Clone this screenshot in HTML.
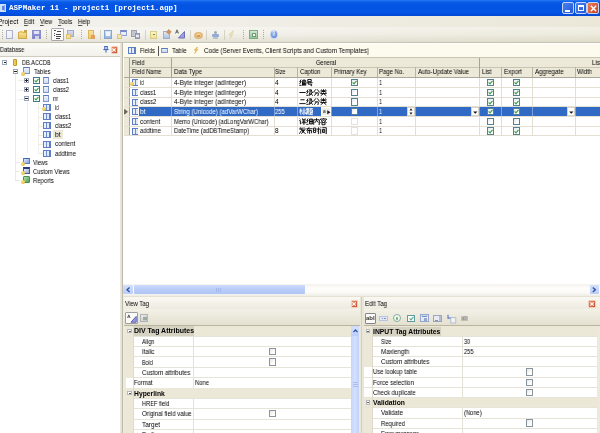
<!DOCTYPE html>
<html><head><meta charset="utf-8"><title>ASPMaker</title>
<style>
html,body{margin:0;padding:0;}
body{width:600px;height:433px;overflow:hidden;position:relative;background:#ece9d8;font-family:"Liberation Sans",sans-serif;font-size:6.5px;color:#000;}
div{position:absolute;box-sizing:border-box;}
u{text-decoration-color:#555;text-decoration-thickness:0.6px;text-underline-offset:0.6px;}
svg{position:absolute;overflow:visible;}
.t{white-space:nowrap;line-height:8px;height:8px;will-change:transform;}
.b{font-weight:bold;}
.cb{width:7px;height:7px;background:#fff;border:1px solid #5a7a9c;}
</style></head><body>
<div id="w" style="left:0;top:0;width:600px;height:433px;filter:blur(0.35px);">

<div style="left:0px;top:0px;width:600px;height:16px;background:linear-gradient(#2a7af5 0%,#0a5ce8 12%,#0453e2 35%,#0456e8 75%,#0349d4 100%);"></div>
<div style="left:0px;top:4px;width:6px;height:7.5px;background:#cfe0fa;"></div>
<div style="left:1.5px;top:5.5px;width:2px;height:4.5px;background:#5a86dc;"></div>
<div style="left:4px;top:4.5px;width:1.2px;height:6px;background:#7fa4e8;"></div>
<div class="t" style="left:9.1px;top:3px;font-family:'Liberation Mono',monospace;font-weight:bold;font-size:7.6px;color:#fff;line-height:10px;height:10px;">ASPMaker 11 - project1 [project1.agp]</div>
<div style="left:561.5px;top:2px;width:12px;height:12px;background:linear-gradient(135deg,#4a82ee,#2456d8);border:1px solid #c3d4f8;border-radius:2px;"></div>
<div style="left:574.5px;top:2px;width:12px;height:12px;background:linear-gradient(135deg,#4a82ee,#2456d8);border:1px solid #c3d4f8;border-radius:2px;"></div>
<div style="left:587.2px;top:2px;width:12px;height:12px;background:linear-gradient(135deg,#e8805a,#c8401c);border:1px solid #c3d4f8;border-radius:2px;"></div>
<div style="left:565px;top:10px;width:5px;height:2px;background:#fff;"></div>
<div style="left:578px;top:5px;width:6px;height:6px;border:1px solid #fff;border-top:2px solid #fff;"></div>
<svg style="left:590px;top:4.5px" width="7" height="7" viewBox="0 0 7 7"><path d="M0.8 0.8L6.2 6.2M6.2 0.8L0.8 6.2" stroke="#fff" stroke-width="1.4" fill="none"/></svg>
<div style="left:0px;top:16px;width:600px;height:11px;background:linear-gradient(90deg,#f3f2ed 0%,#efede4 50%,#ebe8d9 100%);"></div>
<div class="t" style="left:-1.6px;top:17.5px;transform:scaleX(0.984);transform-origin:0 0;"><u>P</u>roject</div>
<div class="t" style="left:23.5px;top:17.5px;transform:scaleX(0.911);transform-origin:0 0;"><u>E</u>dit</div>
<div class="t" style="left:40px;top:17.5px;transform:scaleX(0.873);transform-origin:0 0;"><u>V</u>iew</div>
<div class="t" style="left:58px;top:17.5px;transform:scaleX(0.936);transform-origin:0 0;"><u>T</u>ools</div>
<div class="t" style="left:78px;top:17.5px;transform:scaleX(0.898);transform-origin:0 0;"><u>H</u>elp</div>
<div style="left:0px;top:27px;width:600px;height:16px;background:linear-gradient(rgba(255,255,255,.35) 0%,rgba(255,255,255,.15) 45%,rgba(120,110,60,.10) 100%),linear-gradient(90deg,#f3f2ed 0%,#efede4 50%,#ebe8d9 100%);border-bottom:1px solid #c6c3b2;"></div>
<div style="left:0px;top:43px;width:120px;height:13px;background:linear-gradient(#fbfbf8,#f2f1ea);"></div>
<div class="t" style="left:0px;top:46px;transform:scaleX(0.870);transform-origin:0 0;">Database</div>
<div style="left:0px;top:55.6px;width:120px;height:377.4px;background:#fff;border-top:1px solid #cfccbe;"></div>
<div style="left:119.6px;top:43px;width:4.4px;height:390px;background:linear-gradient(90deg,#eceae2 0%,#e4e1d4 40%,#bdb9a8 62%,#e8e5da 80%,#f6f5f0 100%);"></div>
<div style="left:123px;top:43px;width:477px;height:14.5px;background:#fdfbee;border-top:0.6px solid #fff;"></div>
<div style="left:123px;top:57.5px;width:477px;height:226.5px;background:#fff;"></div>
<div style="left:0;top:0;width:600px;height:43px;opacity:.8">
<div style="left:1.5px;top:30px;width:1px;height:1px;background:#9c9a8c;"></div>
<div style="left:1.5px;top:32px;width:1px;height:1px;background:#9c9a8c;"></div>
<div style="left:1.5px;top:34px;width:1px;height:1px;background:#9c9a8c;"></div>
<div style="left:1.5px;top:36px;width:1px;height:1px;background:#9c9a8c;"></div>
<div style="left:1.5px;top:38px;width:1px;height:1px;background:#9c9a8c;"></div>
<div style="left:5.5px;top:29.5px;width:7.5px;height:9.5px;background:linear-gradient(135deg,#fff,#e4e6f4);border:1px solid #9aa0c4;"></div>
<div style="left:18px;top:32px;width:9px;height:6.5px;background:linear-gradient(#f6dc78,#e6b93c);border:1px solid #c49a2e;"></div>
<div style="left:18.5px;top:30.5px;width:4px;height:2px;background:#e9c04c;"></div>
<div style="left:23.5px;top:29.5px;width:3px;height:2px;background:#c08a30;"></div>
<div style="left:32px;top:30px;width:9px;height:9px;background:linear-gradient(#8a8ed8,#5a62c0);border:1px solid #6e74c4;"></div>
<div style="left:34px;top:30.5px;width:5px;height:3.5px;background:#dfe2f6;"></div>
<div style="left:34.5px;top:36px;width:4px;height:3px;background:#c8ccee;"></div>
<div style="left:46px;top:30px;width:1px;height:1px;background:#9c9a8c;"></div>
<div style="left:46px;top:32px;width:1px;height:1px;background:#9c9a8c;"></div>
<div style="left:46px;top:34px;width:1px;height:1px;background:#9c9a8c;"></div>
<div style="left:46px;top:36px;width:1px;height:1px;background:#9c9a8c;"></div>
<div style="left:46px;top:38px;width:1px;height:1px;background:#9c9a8c;"></div>
<div style="left:50.5px;top:27.5px;width:13.5px;height:13.5px;background:#fff;border:1px solid #9a98a0;border-radius:1px;"></div>
<div style="left:53.5px;top:30px;width:2px;height:1.2px;background:#222;"></div>
<div style="left:56.5px;top:30.5px;width:4px;height:1.2px;background:#222;"></div>
<div style="left:54px;top:32.5px;width:1px;height:1.2px;background:#222;"></div>
<div style="left:55.5px;top:33.5px;width:2px;height:1.2px;background:#222;"></div>
<div style="left:58px;top:33.5px;width:3px;height:1.2px;background:#222;"></div>
<div style="left:55.5px;top:36px;width:2px;height:1.2px;background:#222;"></div>
<div style="left:58px;top:36px;width:3px;height:1.2px;background:#222;"></div>
<div style="left:54px;top:34.5px;width:1px;height:1.2px;background:#222;"></div>
<div style="left:56px;top:38px;width:4px;height:1.2px;background:#222;"></div>
<div style="left:67px;top:30px;width:7px;height:6.5px;background:linear-gradient(#cfd6f0,#aab4e0);border:1px solid #8e98cc;"></div>
<div style="left:65.5px;top:33.5px;width:5px;height:5px;background:#f2dc8a;border:1px solid #d6b850;"></div>
<div style="left:80.5px;top:30px;width:1px;height:1px;background:#9c9a8c;"></div>
<div style="left:80.5px;top:32px;width:1px;height:1px;background:#9c9a8c;"></div>
<div style="left:80.5px;top:34px;width:1px;height:1px;background:#9c9a8c;"></div>
<div style="left:80.5px;top:36px;width:1px;height:1px;background:#9c9a8c;"></div>
<div style="left:80.5px;top:38px;width:1px;height:1px;background:#9c9a8c;"></div>
<div style="left:87.5px;top:30px;width:6px;height:8.5px;background:linear-gradient(#f8e08a,#efc04a);border:1px solid #d8a83a;"></div>
<div style="left:91px;top:35px;width:4px;height:3.5px;background:#e08a3a;"></div>
<div style="left:99.5px;top:29.5px;width:1px;height:10.5px;background:#cfcbbb;"></div>
<div style="left:104px;top:30px;width:8px;height:8.5px;background:linear-gradient(#d6e6f8,#7aa6dc);border:1px solid #6a94cc;"></div>
<div style="left:106px;top:32px;width:4px;height:4px;background:#f0f6fc;"></div>
<div style="left:119.5px;top:29.5px;width:7px;height:6.5px;background:#e6ebf8;border:1px solid #7a8ccc;border-top:2px solid #5a70c0;"></div>
<div style="left:116.5px;top:33.5px;width:5px;height:5px;background:#f4e4a0;border:1px solid #d8bc5c;"></div>
<div style="left:131px;top:29.5px;width:6px;height:7.5px;background:#b8bcc8;border:1px solid #8a8e9c;"></div>
<div style="left:134.5px;top:33px;width:5.5px;height:5.5px;background:#9aa4c0;border:1px solid #7480a4;"></div>
<div style="left:136px;top:35px;width:2.5px;height:2px;background:#e8ecf4;"></div>
<div style="left:145px;top:29.5px;width:1px;height:10.5px;background:#cfcbbb;"></div>
<div style="left:150px;top:31px;width:7px;height:7.5px;background:linear-gradient(#fbf4b8,#efe088);border:1px solid #d4c66c;"></div>
<div style="left:153px;top:33.5px;width:1.5px;height:1.5px;background:#6a6a4a;"></div>
<div style="left:162.5px;top:31px;width:7px;height:7.5px;background:linear-gradient(#dfe8f6,#9cb8e0);border:1px solid #88a0cc;"></div>
<div style="left:167px;top:29.5px;width:4px;height:3.5px;background:#c8783a;transform:rotate(40deg);"></div>
<svg style="left:175px;top:29px" width="10" height="10" viewBox="0 0 10 10"><path d="M3.5 9L9.5 2.5V9Z" fill="#8a8ee0" stroke="#4a4eb0" stroke-width="1"/><path d="M0.5 4.5L2 0.8L3.5 4.5M1 3.2H3" stroke="#333" stroke-width="0.9" fill="none"/></svg>
<div style="left:190px;top:29.5px;width:1px;height:10.5px;background:#cfcbbb;"></div>
<div style="left:194px;top:31.5px;width:8.5px;height:7.5px;background:radial-gradient(circle at 50% 45%,#fbe2b6 0,#f0b866 45%,#dd9a3e 100%);border-radius:4px;border:1px solid #d8a050;"></div>
<div style="left:196.8px;top:34.5px;width:3px;height:2.5px;background:#fff4dc;border:1px solid #c8893a;"></div>
<div style="left:206px;top:29.5px;width:1px;height:10.5px;background:#cfcbbb;"></div>
<div style="left:213.5px;top:30.5px;width:3.5px;height:3.5px;background:#8a94b4;border-radius:2px;"></div>
<div style="left:211.5px;top:34px;width:7.5px;height:3px;background:#7f9ad0;border-radius:1px;"></div>
<div style="left:212.5px;top:37px;width:5.5px;height:1.5px;background:#b0b8cc;"></div>
<div style="left:223.5px;top:29.5px;width:1px;height:10.5px;background:#cfcbbb;"></div>
<svg style="left:228px;top:30px" width="8" height="9" viewBox="0 0 8 9"><path d="M5 0.5L2.5 4H5L2 8.5L3 5H1L3 2.5H5.5Z" fill="#e8dca4" stroke="#d8cc94" stroke-width="0.6"/></svg>
<div style="left:243px;top:30px;width:1px;height:1px;background:#9c9a8c;"></div>
<div style="left:243px;top:32px;width:1px;height:1px;background:#9c9a8c;"></div>
<div style="left:243px;top:34px;width:1px;height:1px;background:#9c9a8c;"></div>
<div style="left:243px;top:36px;width:1px;height:1px;background:#9c9a8c;"></div>
<div style="left:243px;top:38px;width:1px;height:1px;background:#9c9a8c;"></div>
<div style="left:249px;top:30px;width:8.5px;height:9px;background:linear-gradient(#cfe6cc,#7db987);border:1px solid #5f9a6c;"></div>
<div style="left:251.5px;top:32.5px;width:4px;height:4px;background:#f4faf2;border:1px solid #4c8a5c;"></div>
<div style="left:263px;top:30px;width:1px;height:1px;background:#9c9a8c;"></div>
<div style="left:263px;top:32px;width:1px;height:1px;background:#9c9a8c;"></div>
<div style="left:263px;top:34px;width:1px;height:1px;background:#9c9a8c;"></div>
<div style="left:263px;top:36px;width:1px;height:1px;background:#9c9a8c;"></div>
<div style="left:263px;top:38px;width:1px;height:1px;background:#9c9a8c;"></div>
<div style="left:269.5px;top:30px;width:8.5px;height:8.5px;background:radial-gradient(circle at 45% 40%,#9cbcf4 0,#4f7fdc 55%,#2f5cc0 100%);border-radius:5px;border:1px solid #b8cdf4;"></div>
<div class="t" style="left:271.9px;top:30.3px;color:#fff;font-weight:bold;font-size:6.5px;transform:scaleX(0.870);transform-origin:0 0;">?</div>
</div>
<div style="left:15.4px;top:74.37px;width:0.6px;height:105.83999999999997px;background:#ebebe5;"></div>
<div style="left:27px;top:101.58px;width:0.6px;height:51.42px;background:#eeeee8;"></div>
<div style="left:38px;top:102.58px;width:0.6px;height:50.42px;background:#f0f0ea;"></div>
<div style="left:38px;top:107.65px;width:5px;height:0.6px;background:#eeeee8;"></div>
<div style="left:38px;top:116.72px;width:5px;height:0.6px;background:#eeeee8;"></div>
<div style="left:38px;top:125.78999999999999px;width:5px;height:0.6px;background:#eeeee8;"></div>
<div style="left:38px;top:134.86px;width:5px;height:0.6px;background:#eeeee8;"></div>
<div style="left:38px;top:143.93px;width:5px;height:0.6px;background:#eeeee8;"></div>
<div style="left:38px;top:153.0px;width:5px;height:0.6px;background:#eeeee8;"></div>
<div style="left:15.4px;top:162.07px;width:5px;height:0.6px;background:#ebebe5;"></div>
<div style="left:15.4px;top:171.14px;width:5px;height:0.6px;background:#ebebe5;"></div>
<div style="left:15.4px;top:180.20999999999998px;width:5px;height:0.6px;background:#ebebe5;"></div>
<div style="left:18px;top:80.44px;width:6px;height:0.6px;background:#eeeee8;"></div>
<div style="left:18px;top:89.50999999999999px;width:6px;height:0.6px;background:#eeeee8;"></div>
<div style="left:18px;top:98.58px;width:6px;height:0.6px;background:#eeeee8;"></div>
<div style="left:2.4px;top:60.099999999999994px;width:4.6px;height:4.6px;background:#fff;border:1px solid #9aa6b8;"></div>
<div style="left:3.5px;top:62.099999999999994px;width:2.4px;height:0.8px;background:#222;"></div>
<div style="left:13px;top:59.099999999999994px;width:4.4px;height:6.8px;background:linear-gradient(90deg,#e8b838,#fae68c 50%,#d8a028);border-radius:1.5px/1px;border:0.5px solid #c89820;"></div>
<div class="t" style="left:22.2px;top:58.8px;transform:scaleX(0.851);transform-origin:0 0;">DB.ACCDB</div>
<div style="left:13.3px;top:69.17px;width:4.6px;height:4.6px;background:#fff;border:1px solid #9aa6b8;"></div>
<div style="left:14.4px;top:71.17px;width:2.4px;height:0.8px;background:#222;"></div>
<div style="left:23px;top:67.17px;width:7px;height:6.4px;background:linear-gradient(#eef3fb,#cfdcf2);border:1px solid #7f95c8;border-top:1.6px solid #5c78c0;"></div>
<div style="left:21px;top:71.57000000000001px;width:4.2px;height:4.2px;background:radial-gradient(circle at 40% 35%,#f8e47a,#d8b030);border-radius:2.2px;"></div>
<div class="t" style="left:33.5px;top:67.87px;transform:scaleX(0.878);transform-origin:0 0;">Tables</div>
<div style="left:24.3px;top:78.24px;width:4.6px;height:4.6px;background:#fff;border:1px solid #9aa6b8;"></div>
<div style="left:25.400000000000002px;top:80.24px;width:2.4px;height:0.8px;background:#222;"></div>
<div style="left:26.2px;top:79.34px;width:0.8px;height:2.6px;background:#222;"></div>
<div style="left:32.7px;top:76.84px;width:7.2px;height:7.2px;background:#fff;border:1px solid #3d7a8c;"></div>
<svg style="left:33.900000000000006px;top:78.03999999999999px" width="5" height="5" viewBox="0 0 5 5"><path d="M0.6 2.4L2 3.9L4.5 0.8" stroke="#3aa24a" stroke-width="1.2" fill="none"/></svg>
<div style="left:42.6px;top:77.14px;width:6.8px;height:6.6px;background:linear-gradient(#eef3fb,#cfdcf2);border:1px solid #7f95c8;border-top:1.6px solid #5c78c0;"></div>
<div class="t" style="left:53.3px;top:76.94px;transform:scaleX(0.870);transform-origin:0 0;">class1</div>
<div style="left:24.3px;top:87.30999999999999px;width:4.6px;height:4.6px;background:#fff;border:1px solid #9aa6b8;"></div>
<div style="left:25.400000000000002px;top:89.30999999999999px;width:2.4px;height:0.8px;background:#222;"></div>
<div style="left:26.2px;top:88.41px;width:0.8px;height:2.6px;background:#222;"></div>
<div style="left:32.7px;top:85.91px;width:7.2px;height:7.2px;background:#fff;border:1px solid #3d7a8c;"></div>
<svg style="left:33.900000000000006px;top:87.10999999999999px" width="5" height="5" viewBox="0 0 5 5"><path d="M0.6 2.4L2 3.9L4.5 0.8" stroke="#3aa24a" stroke-width="1.2" fill="none"/></svg>
<div style="left:42.6px;top:86.21px;width:6.8px;height:6.6px;background:linear-gradient(#eef3fb,#cfdcf2);border:1px solid #7f95c8;border-top:1.6px solid #5c78c0;"></div>
<div class="t" style="left:53.3px;top:86.00999999999999px;transform:scaleX(0.870);transform-origin:0 0;">class2</div>
<div style="left:24.3px;top:96.38px;width:4.6px;height:4.6px;background:#fff;border:1px solid #9aa6b8;"></div>
<div style="left:25.400000000000002px;top:98.38px;width:2.4px;height:0.8px;background:#222;"></div>
<div style="left:32.7px;top:94.98px;width:7.2px;height:7.2px;background:#fff;border:1px solid #3d7a8c;"></div>
<svg style="left:33.900000000000006px;top:96.17999999999999px" width="5" height="5" viewBox="0 0 5 5"><path d="M0.6 2.4L2 3.9L4.5 0.8" stroke="#3aa24a" stroke-width="1.2" fill="none"/></svg>
<div style="left:42.6px;top:95.28px;width:6.8px;height:6.6px;background:linear-gradient(#eef3fb,#cfdcf2);border:1px solid #7f95c8;border-top:1.6px solid #5c78c0;"></div>
<div class="t" style="left:53.3px;top:95.08px;transform:scaleX(0.870);transform-origin:0 0;">nr</div>
<div style="left:43.3px;top:104.25px;width:7.4px;height:7px;background:linear-gradient(90deg,#5f7dc6 0 1.2px,#eaf0fb 1.2px 3.2px,#6f8bd0 3.2px 4.2px,#e2eafa 4.2px 6.2px,#5f7dc6 6.2px);border-top:1.4px solid #5f7dc6;border-bottom:1.2px solid #5f7dc6;"></div>
<div style="left:41.8px;top:107.15px;width:4.2px;height:4.2px;background:radial-gradient(circle at 40% 35%,#f8e47a,#d8b030);border-radius:2.2px;"></div>
<div class="t" style="left:55.4px;top:104.15px;transform:scaleX(0.712);transform-origin:0 0;">id</div>
<div style="left:43.3px;top:113.32px;width:7.4px;height:7px;background:linear-gradient(90deg,#5f7dc6 0 1.2px,#eaf0fb 1.2px 3.2px,#6f8bd0 3.2px 4.2px,#e2eafa 4.2px 6.2px,#5f7dc6 6.2px);border-top:1.4px solid #5f7dc6;border-bottom:1.2px solid #5f7dc6;"></div>
<div class="t" style="left:54.6px;top:113.22px;transform:scaleX(0.885);transform-origin:0 0;">class1</div>
<div style="left:43.3px;top:122.38999999999999px;width:7.4px;height:7px;background:linear-gradient(90deg,#5f7dc6 0 1.2px,#eaf0fb 1.2px 3.2px,#6f8bd0 3.2px 4.2px,#e2eafa 4.2px 6.2px,#5f7dc6 6.2px);border-top:1.4px solid #5f7dc6;border-bottom:1.2px solid #5f7dc6;"></div>
<div class="t" style="left:54.6px;top:122.28999999999999px;transform:scaleX(0.885);transform-origin:0 0;">class2</div>
<div style="left:53px;top:130.46px;width:10.2px;height:8.6px;background:#ece9d8;"></div>
<div style="left:43.3px;top:131.46px;width:7.4px;height:7px;background:linear-gradient(90deg,#5f7dc6 0 1.2px,#eaf0fb 1.2px 3.2px,#6f8bd0 3.2px 4.2px,#e2eafa 4.2px 6.2px,#5f7dc6 6.2px);border-top:1.4px solid #5f7dc6;border-bottom:1.2px solid #5f7dc6;"></div>
<div class="t" style="left:54.6px;top:131.36px;transform:scaleX(1.033);transform-origin:0 0;">bt</div>
<div style="left:43.3px;top:140.53px;width:7.4px;height:7px;background:linear-gradient(90deg,#5f7dc6 0 1.2px,#eaf0fb 1.2px 3.2px,#6f8bd0 3.2px 4.2px,#e2eafa 4.2px 6.2px,#5f7dc6 6.2px);border-top:1.4px solid #5f7dc6;border-bottom:1.2px solid #5f7dc6;"></div>
<div class="t" style="left:54.6px;top:140.43px;transform:scaleX(0.952);transform-origin:0 0;">content</div>
<div style="left:43.3px;top:149.6px;width:7.4px;height:7px;background:linear-gradient(90deg,#5f7dc6 0 1.2px,#eaf0fb 1.2px 3.2px,#6f8bd0 3.2px 4.2px,#e2eafa 4.2px 6.2px,#5f7dc6 6.2px);border-top:1.4px solid #5f7dc6;border-bottom:1.2px solid #5f7dc6;"></div>
<div class="t" style="left:54.6px;top:149.5px;transform:scaleX(0.908);transform-origin:0 0;">addtime</div>
<div style="left:23.2px;top:158.47px;width:6.6px;height:6px;background:linear-gradient(135deg,#dfe8fb,#7f9fe0);border:1px solid #5c7cc8;border-top:1.6px solid #4464b8;"></div>
<div style="left:21px;top:161.67px;width:4.2px;height:4.2px;background:radial-gradient(circle at 40% 35%,#f8e47a,#d8b030);border-radius:2.2px;"></div>
<div class="t" style="left:33.3px;top:158.57px;transform:scaleX(0.848);transform-origin:0 0;">Views</div>
<div style="left:23.2px;top:167.33999999999997px;width:6.6px;height:6.2px;background:linear-gradient(135deg,#e8ecf8,#98a8d8);border:1px solid #4a5a9c;border-top:2px solid #2c3a78;"></div>
<div style="left:21px;top:170.73999999999998px;width:4.2px;height:4.2px;background:radial-gradient(circle at 40% 35%,#f8e47a,#d8b030);border-radius:2.2px;"></div>
<div class="t" style="left:33.3px;top:167.64px;transform:scaleX(0.884);transform-origin:0 0;">Custom Views</div>
<div style="left:22.6px;top:176.40999999999997px;width:7.2px;height:6.4px;background:linear-gradient(135deg,#b4e0a4,#4f9e58);border:1px solid #4a8c52;border-radius:1px;"></div>
<div style="left:21px;top:180.01px;width:4.2px;height:4.2px;background:radial-gradient(circle at 40% 35%,#f8e47a,#d8b030);border-radius:2.2px;"></div>
<div class="t" style="left:33.3px;top:176.70999999999998px;transform:scaleX(0.914);transform-origin:0 0;">Reports</div>
<svg style="left:102.5px;top:46px" width="6" height="7" viewBox="0 0 6 7"><path d="M1.2 0.6H4.8M1.8 0.6V3.4M4.2 0.6V3.4M0.4 3.6H5.6M3 3.6V6.6" stroke="#3a5cc0" stroke-width="1" fill="none"/></svg>
<div style="left:110.6px;top:46.2px;width:7.6px;height:7.6px;background:linear-gradient(135deg,#ea8a64,#c9502c);border:0.6px solid #f2cdbd;border-radius:1px;"></div>
<svg style="left:112.39999999999999px;top:48.0px" width="4" height="4" viewBox="0 0 4 4"><path d="M0.3 0.3L3.7 3.7M3.7 0.3L0.3 3.7" stroke="#fff" stroke-width="1.2" fill="none"/></svg>
<div style="left:128.2px;top:47.300000000000004px;width:7.4px;height:7px;background:linear-gradient(90deg,#5f7dc6 0 1.2px,#eaf0fb 1.2px 3.2px,#6f8bd0 3.2px 4.2px,#e2eafa 4.2px 6.2px,#5f7dc6 6.2px);border-top:1.4px solid #5f7dc6;border-bottom:1.2px solid #5f7dc6;"></div>
<div class="t" style="left:140px;top:47.2px;transform:scaleX(0.865);transform-origin:0 0;">Fields</div>
<div style="left:158px;top:45.5px;width:1px;height:10.5px;background:#555;"></div>
<div style="left:161px;top:47.6px;width:6.8px;height:5.6px;background:linear-gradient(#e6eefb,#c6d6f2);border:1px solid #7f95c8;border-top:1.6px solid #5c78c0;"></div>
<div class="t" style="left:172.4px;top:47.2px;transform:scaleX(0.940);transform-origin:0 0;">Table</div>
<svg style="left:192.8px;top:46.8px" width="6" height="7" viewBox="0 0 7 8"><path d="M4.5 0.3L1.5 3.6H3.6L1.8 7.6L5.8 2.8H3.6L5.6 0.3Z" fill="#f4c45a" stroke="#cf9a3a" stroke-width="0.5"/></svg>
<div class="t" style="left:204px;top:47.2px;transform:scaleX(0.956);transform-origin:0 0;">Code (Server Events, Client Scripts and Custom Templates)</div>
<div style="left:123.6px;top:57.6px;width:476.4px;height:20px;background:#ece9d8;"></div>
<div style="left:123.6px;top:57.2px;width:476.4px;height:0.8px;background:#c8c4b4;"></div>
<div style="left:129.6px;top:67px;width:470.4px;height:0.8px;background:#c9c5b5;"></div>
<div style="left:123.6px;top:77.2px;width:476.4px;height:0.8px;background:#aca899;"></div>
<div style="left:129.1px;top:57.6px;width:1px;height:20px;background:#a8a494;"></div>
<div style="left:171.1px;top:57.6px;width:1px;height:20px;background:#a8a494;"></div>
<div style="left:478.5px;top:57.6px;width:1px;height:20px;background:#a8a494;"></div>
<div style="left:273.5px;top:67.4px;width:1px;height:10px;background:#b8b4a4;"></div>
<div style="left:296.5px;top:67.4px;width:1px;height:10px;background:#b8b4a4;"></div>
<div style="left:330.5px;top:67.4px;width:1px;height:10px;background:#b8b4a4;"></div>
<div style="left:376.5px;top:67.4px;width:1px;height:10px;background:#b8b4a4;"></div>
<div style="left:414.5px;top:67.4px;width:1px;height:10px;background:#b8b4a4;"></div>
<div style="left:500.5px;top:67.4px;width:1px;height:10px;background:#b8b4a4;"></div>
<div style="left:531.5px;top:67.4px;width:1px;height:10px;background:#b8b4a4;"></div>
<div style="left:574.5px;top:67.4px;width:1px;height:10px;background:#b8b4a4;"></div>
<div class="t" style="left:131.6px;top:58.6px;transform:scaleX(0.880);transform-origin:0 0;">Field</div>
<div class="t" style="left:316px;top:58.6px;transform:scaleX(0.865);transform-origin:0 0;">General</div>
<div class="t" style="left:591.5px;top:58.6px;transform:scaleX(0.939);transform-origin:0 0;">List</div>
<div class="t" style="left:131.6px;top:68.4px;transform:scaleX(0.885);transform-origin:0 0;">Field Name</div>
<div class="t" style="left:174px;top:68.4px;transform:scaleX(0.949);transform-origin:0 0;">Data Type</div>
<div class="t" style="left:275.4px;top:68.4px;transform:scaleX(0.830);transform-origin:0 0;">Size</div>
<div class="t" style="left:300px;top:68.4px;transform:scaleX(0.915);transform-origin:0 0;">Caption</div>
<div class="t" style="left:333.5px;top:68.4px;transform:scaleX(0.918);transform-origin:0 0;">Primary Key</div>
<div class="t" style="left:378.5px;top:68.4px;transform:scaleX(0.923);transform-origin:0 0;">Page No.</div>
<div class="t" style="left:417.5px;top:68.4px;transform:scaleX(0.937);transform-origin:0 0;">Auto-Update Value</div>
<div class="t" style="left:481.5px;top:68.4px;transform:scaleX(0.939);transform-origin:0 0;">List</div>
<div class="t" style="left:503.5px;top:68.4px;transform:scaleX(0.958);transform-origin:0 0;">Export</div>
<div class="t" style="left:535px;top:68.4px;transform:scaleX(0.950);transform-origin:0 0;">Aggregate</div>
<div class="t" style="left:576.5px;top:68.4px;transform:scaleX(0.903);transform-origin:0 0;">Width</div>
<div style="left:123.6px;top:77.6px;width:6px;height:58.1px;background:#ece9d8;"></div>
<div style="left:129.1px;top:77.6px;width:1px;height:58.1px;background:#a8a494;"></div>
<div style="left:123.6px;top:87.0px;width:476.4px;height:0.8px;background:#e3e0d3;"></div>
<div style="left:131.5px;top:79.2px;width:6.8px;height:7.2px;background:linear-gradient(90deg,#5f7dc6 0 1.2px,#eaf0fb 1.2px 2.9px,#6f8bd0 2.9px 3.9px,#e2eafa 3.9px 5.6px,#5f7dc6 5.6px);border-top:1.4px solid #5f7dc6;border-bottom:1.2px solid #5f7dc6;"></div>
<div style="left:129.8px;top:82.3px;width:4.2px;height:4.2px;background:radial-gradient(circle at 40% 35%,#f8e47a,#d8b030);border-radius:2.2px;"></div>
<div class="t" style="left:140px;top:79.0px;color:#000;transform:scaleX(0.712);transform-origin:0 0;">id</div>
<div class="t" style="left:174px;top:79.0px;color:#000;transform:scaleX(0.972);transform-origin:0 0;">4-Byte integer (adInteger)</div>
<div class="t" style="left:275.4px;top:79.0px;color:#000;transform:scaleX(0.885);transform-origin:0 0;">4</div>
<svg style="left:299.00px;top:79.10000000000001px" width="7" height="7" viewBox="0 0 10 10"><path d="M3 0.8L1 3.8H3.2L0.8 7 M0.4 9H3.6 M7 0.3L7.5 1.4 M5 2H9.6V3.9H5V2 M5 3.9V9.6 M6.5 5.5V9.4 M8 5.5V9.4 M9.6 5.5V9.6 M5 5.5H9.6 M5 7.3H9.6" stroke="#000" stroke-width="1.3" fill="none"/></svg>
<svg style="left:305.85px;top:79.10000000000001px" width="7" height="7" viewBox="0 0 10 10"><path d="M2.5 0.8H7.5V3.8H2.5Z M0.5 5.3H9.5 M3.5 5.3L3 7.4H8V9.6L6.5 9.2" stroke="#000" stroke-width="1.3" fill="none"/></svg>
<div style="left:351.0px;top:79.10000000000001px;width:7.2px;height:7.2px;background:linear-gradient(135deg,#e4e8ee,#fff 70%);border:1px solid #55808f;"></div>
<svg style="left:352.1px;top:80.3px" width="5" height="5" viewBox="0 0 5 5"><path d="M0.6 2.4L2 3.9L4.5 0.8" stroke="#3aa24a" stroke-width="1.2" fill="none"/></svg>
<div class="t" style="left:379px;top:79.0px;color:#000;transform:scaleX(0.830);transform-origin:0 0;">1</div>
<div style="left:486.9px;top:79.10000000000001px;width:7.2px;height:7.2px;background:linear-gradient(135deg,#e4e8ee,#fff 70%);border:1px solid #55808f;"></div>
<svg style="left:488.0px;top:80.3px" width="5" height="5" viewBox="0 0 5 5"><path d="M0.6 2.4L2 3.9L4.5 0.8" stroke="#3aa24a" stroke-width="1.2" fill="none"/></svg>
<div style="left:513.3px;top:79.10000000000001px;width:7.2px;height:7.2px;background:linear-gradient(135deg,#e4e8ee,#fff 70%);border:1px solid #55808f;"></div>
<svg style="left:514.4px;top:80.3px" width="5" height="5" viewBox="0 0 5 5"><path d="M0.6 2.4L2 3.9L4.5 0.8" stroke="#3aa24a" stroke-width="1.2" fill="none"/></svg>
<div style="left:123.6px;top:96.6px;width:476.4px;height:0.8px;background:#e3e0d3;"></div>
<div style="left:131.5px;top:88.9px;width:6.8px;height:7.2px;background:linear-gradient(90deg,#5f7dc6 0 1.2px,#eaf0fb 1.2px 2.9px,#6f8bd0 2.9px 3.9px,#e2eafa 3.9px 5.6px,#5f7dc6 5.6px);border-top:1.4px solid #5f7dc6;border-bottom:1.2px solid #5f7dc6;"></div>
<div class="t" style="left:140px;top:88.7px;color:#000;transform:scaleX(0.885);transform-origin:0 0;">class1</div>
<div class="t" style="left:174px;top:88.7px;color:#000;transform:scaleX(0.972);transform-origin:0 0;">4-Byte integer (adInteger)</div>
<div class="t" style="left:275.4px;top:88.7px;color:#000;transform:scaleX(0.885);transform-origin:0 0;">4</div>
<svg style="left:299.00px;top:88.80000000000001px" width="7" height="7" viewBox="0 0 10 10"><path d="M0.5 5H9.5" stroke="#000" stroke-width="1.3" fill="none"/></svg>
<svg style="left:305.85px;top:88.80000000000001px" width="7" height="7" viewBox="0 0 10 10"><path d="M3 0.8L1 3.8H3.2L0.8 7 M0.4 9H3.6 M4.5 1.3H8L7 4.4H9.6L5 9.6 M6 1.3L5.5 5L4.4 9.2 M6.5 5.6L9.6 9.6" stroke="#000" stroke-width="1.3" fill="none"/></svg>
<svg style="left:312.70px;top:88.80000000000001px" width="7" height="7" viewBox="0 0 10 10"><path d="M4 0.5L0.5 5 M6 0.5L9.5 5 M2.5 5.5H7.5V9.2L6.4 9.4 M5 5.5L2 9.6" stroke="#000" stroke-width="1.3" fill="none"/></svg>
<svg style="left:319.55px;top:88.80000000000001px" width="7" height="7" viewBox="0 0 10 10"><path d="M5 0.4V5 M0.5 2.7H9.5 M2 0.7L3.4 2 M8 0.7L6.6 2 M5 2.7L1 5 M5 2.7L9 5 M0.5 6.5H9.5 M5 5.5V6.5L1 9.6 M5 6.5L9 9.6" stroke="#000" stroke-width="1.3" fill="none"/></svg>
<div style="left:351.0px;top:88.80000000000001px;width:7.2px;height:7.2px;background:linear-gradient(135deg,#e4e8ee,#fff 70%);border:1px solid #55808f;"></div>
<div class="t" style="left:379px;top:88.7px;color:#000;transform:scaleX(0.830);transform-origin:0 0;">1</div>
<div style="left:486.9px;top:88.80000000000001px;width:7.2px;height:7.2px;background:linear-gradient(135deg,#e4e8ee,#fff 70%);border:1px solid #55808f;"></div>
<svg style="left:488.0px;top:90.0px" width="5" height="5" viewBox="0 0 5 5"><path d="M0.6 2.4L2 3.9L4.5 0.8" stroke="#3aa24a" stroke-width="1.2" fill="none"/></svg>
<div style="left:513.3px;top:88.80000000000001px;width:7.2px;height:7.2px;background:linear-gradient(135deg,#e4e8ee,#fff 70%);border:1px solid #55808f;"></div>
<svg style="left:514.4px;top:90.0px" width="5" height="5" viewBox="0 0 5 5"><path d="M0.6 2.4L2 3.9L4.5 0.8" stroke="#3aa24a" stroke-width="1.2" fill="none"/></svg>
<div style="left:123.6px;top:106.3px;width:476.4px;height:0.8px;background:#e3e0d3;"></div>
<div style="left:131.5px;top:98.55px;width:6.8px;height:7.2px;background:linear-gradient(90deg,#5f7dc6 0 1.2px,#eaf0fb 1.2px 2.9px,#6f8bd0 2.9px 3.9px,#e2eafa 3.9px 5.6px,#5f7dc6 5.6px);border-top:1.4px solid #5f7dc6;border-bottom:1.2px solid #5f7dc6;"></div>
<div class="t" style="left:140px;top:98.35px;color:#000;transform:scaleX(0.885);transform-origin:0 0;">class2</div>
<div class="t" style="left:174px;top:98.35px;color:#000;transform:scaleX(0.972);transform-origin:0 0;">4-Byte integer (adInteger)</div>
<div class="t" style="left:275.4px;top:98.35px;color:#000;transform:scaleX(0.885);transform-origin:0 0;">4</div>
<svg style="left:299.00px;top:98.45px" width="7" height="7" viewBox="0 0 10 10"><path d="M2 2.5H8 M0.5 8H9.5" stroke="#000" stroke-width="1.3" fill="none"/></svg>
<svg style="left:305.85px;top:98.45px" width="7" height="7" viewBox="0 0 10 10"><path d="M3 0.8L1 3.8H3.2L0.8 7 M0.4 9H3.6 M4.5 1.3H8L7 4.4H9.6L5 9.6 M6 1.3L5.5 5L4.4 9.2 M6.5 5.6L9.6 9.6" stroke="#000" stroke-width="1.3" fill="none"/></svg>
<svg style="left:312.70px;top:98.45px" width="7" height="7" viewBox="0 0 10 10"><path d="M4 0.5L0.5 5 M6 0.5L9.5 5 M2.5 5.5H7.5V9.2L6.4 9.4 M5 5.5L2 9.6" stroke="#000" stroke-width="1.3" fill="none"/></svg>
<svg style="left:319.55px;top:98.45px" width="7" height="7" viewBox="0 0 10 10"><path d="M5 0.4V5 M0.5 2.7H9.5 M2 0.7L3.4 2 M8 0.7L6.6 2 M5 2.7L1 5 M5 2.7L9 5 M0.5 6.5H9.5 M5 5.5V6.5L1 9.6 M5 6.5L9 9.6" stroke="#000" stroke-width="1.3" fill="none"/></svg>
<div style="left:351.0px;top:98.45px;width:7.2px;height:7.2px;background:linear-gradient(135deg,#e4e8ee,#fff 70%);border:1px solid #55808f;"></div>
<div class="t" style="left:379px;top:98.35px;color:#000;transform:scaleX(0.830);transform-origin:0 0;">1</div>
<div style="left:486.9px;top:98.45px;width:7.2px;height:7.2px;background:linear-gradient(135deg,#e4e8ee,#fff 70%);border:1px solid #55808f;"></div>
<svg style="left:488.0px;top:99.64999999999999px" width="5" height="5" viewBox="0 0 5 5"><path d="M0.6 2.4L2 3.9L4.5 0.8" stroke="#3aa24a" stroke-width="1.2" fill="none"/></svg>
<div style="left:513.3px;top:98.45px;width:7.2px;height:7.2px;background:linear-gradient(135deg,#e4e8ee,#fff 70%);border:1px solid #55808f;"></div>
<svg style="left:514.4px;top:99.64999999999999px" width="5" height="5" viewBox="0 0 5 5"><path d="M0.6 2.4L2 3.9L4.5 0.8" stroke="#3aa24a" stroke-width="1.2" fill="none"/></svg>
<div style="left:138.6px;top:107.10000000000001px;width:461.4px;height:9.399999999999995px;background:#316ac5;"></div>
<div style="left:123.6px;top:115.89999999999999px;width:476.4px;height:0.8px;background:#e3e0d3;"></div>
<div style="left:131.5px;top:108.2px;width:6.8px;height:7.2px;background:linear-gradient(90deg,#5f7dc6 0 1.2px,#eaf0fb 1.2px 2.9px,#6f8bd0 2.9px 3.9px,#e2eafa 3.9px 5.6px,#5f7dc6 5.6px);border-top:1.4px solid #5f7dc6;border-bottom:1.2px solid #5f7dc6;"></div>
<div class="t" style="left:140px;top:108.0px;color:#fff;transform:scaleX(1.033);transform-origin:0 0;">bt</div>
<div class="t" style="left:174px;top:108.0px;color:#fff;transform:scaleX(0.931);transform-origin:0 0;">String (Unicode) (adVarWChar)</div>
<div class="t" style="left:275.4px;top:108.0px;color:#fff;transform:scaleX(0.885);transform-origin:0 0;">255</div>
<svg style="left:299.00px;top:108.10000000000001px" width="7" height="7" viewBox="0 0 10 10"><path d="M0.5 3H4.5 M2.5 0.5V9.6 M2.5 3.5L0.5 6.5 M2.5 3.5L4.5 5.5 M5.5 1.5H9 M5 4H9.6 M7.2 4V9.6L6.4 9 M6 5.8L5 8.5 M8.5 5.8L9.6 8.5" stroke="#fff" stroke-width="1.3" fill="none"/></svg>
<svg style="left:305.85px;top:108.10000000000001px" width="7" height="7" viewBox="0 0 10 10"><path d="M1 0.7H4V3.2H1Z M1 2H4 M0.3 4.5H4.7 M2.5 4.5V8 M2.5 6H4.3 M1.2 5.5L0.5 9L2 8.3L9.6 9.6 M5 1H9.8 M7.2 1L6.8 2.5 M5.7 2.8H9.2V6.8H5.7Z M7.4 4V6.8L5.5 8.6 M7.8 7L9.6 8.4" stroke="#fff" stroke-width="1.3" fill="none"/></svg>
<div style="left:351.0px;top:108.10000000000001px;width:7.2px;height:7.2px;background:linear-gradient(135deg,#e4e8ee,#fff 70%);border:1px solid #55808f;"></div>
<div class="t" style="left:379px;top:108.0px;color:#fff;transform:scaleX(0.830);transform-origin:0 0;">1</div>
<div style="left:486.9px;top:108.10000000000001px;width:7.2px;height:7.2px;background:linear-gradient(135deg,#e4e8ee,#fff 70%);border:1px solid #55808f;"></div>
<svg style="left:488.0px;top:109.3px" width="5" height="5" viewBox="0 0 5 5"><path d="M0.6 2.4L2 3.9L4.5 0.8" stroke="#3aa24a" stroke-width="1.2" fill="none"/></svg>
<div style="left:513.3px;top:108.10000000000001px;width:7.2px;height:7.2px;background:linear-gradient(135deg,#e4e8ee,#fff 70%);border:1px solid #55808f;"></div>
<svg style="left:514.4px;top:109.3px" width="5" height="5" viewBox="0 0 5 5"><path d="M0.6 2.4L2 3.9L4.5 0.8" stroke="#3aa24a" stroke-width="1.2" fill="none"/></svg>
<div style="left:123.6px;top:125.6px;width:476.4px;height:0.8px;background:#e3e0d3;"></div>
<div style="left:131.5px;top:117.85000000000001px;width:6.8px;height:7.2px;background:linear-gradient(90deg,#5f7dc6 0 1.2px,#eaf0fb 1.2px 2.9px,#6f8bd0 2.9px 3.9px,#e2eafa 3.9px 5.6px,#5f7dc6 5.6px);border-top:1.4px solid #5f7dc6;border-bottom:1.2px solid #5f7dc6;"></div>
<div class="t" style="left:140px;top:117.65px;color:#000;transform:scaleX(0.952);transform-origin:0 0;">content</div>
<div class="t" style="left:174px;top:117.65px;color:#000;transform:scaleX(0.894);transform-origin:0 0;">Memo (Unicode) (adLongVarWChar)</div>
<svg style="left:299.00px;top:117.75000000000001px" width="7" height="7" viewBox="0 0 10 10"><path d="M1 1L2 2 M0.3 3.8H2V8.5L3.4 7.5 M5 0.5L5.8 1.8 M9 0.5L8.2 1.8 M4.3 2.5H9.7 M4.8 4.6H9.2 M4 6.8H10 M7 2.5V9.8" stroke="#000" stroke-width="1.3" fill="none"/></svg>
<svg style="left:305.85px;top:117.75000000000001px" width="7" height="7" viewBox="0 0 10 10"><path d="M3 0.8L1 3.8H3.2L0.8 7 M0.4 9H3.6 M5 1.5H9.5V8.5H5Z M5 5H9.5 M7.25 1.5V8.5" stroke="#000" stroke-width="1.3" fill="none"/></svg>
<svg style="left:312.70px;top:117.75000000000001px" width="7" height="7" viewBox="0 0 10 10"><path d="M1 2.5H9V9.6L8 9.2 M1 2.5V9.6 M5 0.3V3.5L2.5 7 M5 3.5L7.5 6.5" stroke="#000" stroke-width="1.3" fill="none"/></svg>
<svg style="left:319.55px;top:117.75000000000001px" width="7" height="7" viewBox="0 0 10 10"><path d="M5 0.2V1.2 M0.8 2.8V1.4H9.2V2.8 M3.5 2.6L1.5 4.3 M6.5 2.6L8.5 4.3 M5 3.5L0.5 6.8 M5 3.5L9.5 6.8 M2.8 6.6H7.2V9.6H2.8Z" stroke="#000" stroke-width="1.3" fill="none"/></svg>
<div style="left:351.0px;top:117.75000000000001px;width:7.2px;height:7.2px;background:#fff;border:1px solid #e2e2de;"></div>
<div class="t" style="left:379px;top:117.65px;color:#000;transform:scaleX(0.830);transform-origin:0 0;">1</div>
<div style="left:486.9px;top:117.75000000000001px;width:7.2px;height:7.2px;background:linear-gradient(135deg,#e4e8ee,#fff 70%);border:1px solid #55808f;"></div>
<div style="left:513.3px;top:117.75000000000001px;width:7.2px;height:7.2px;background:linear-gradient(135deg,#e4e8ee,#fff 70%);border:1px solid #55808f;"></div>
<div style="left:123.6px;top:135.29999999999998px;width:476.4px;height:0.8px;background:#e3e0d3;"></div>
<div style="left:131.5px;top:127.54999999999998px;width:6.8px;height:7.2px;background:linear-gradient(90deg,#5f7dc6 0 1.2px,#eaf0fb 1.2px 2.9px,#6f8bd0 2.9px 3.9px,#e2eafa 3.9px 5.6px,#5f7dc6 5.6px);border-top:1.4px solid #5f7dc6;border-bottom:1.2px solid #5f7dc6;"></div>
<div class="t" style="left:140px;top:127.34999999999998px;color:#000;transform:scaleX(0.908);transform-origin:0 0;">addtime</div>
<div class="t" style="left:174px;top:127.34999999999998px;color:#000;transform:scaleX(0.900);transform-origin:0 0;">DateTime (adDBTimeStamp)</div>
<div class="t" style="left:275.4px;top:127.34999999999998px;color:#000;transform:scaleX(0.885);transform-origin:0 0;">8</div>
<svg style="left:299.00px;top:127.44999999999999px" width="7" height="7" viewBox="0 0 10 10"><path d="M2 0.5L1.5 3 M0.5 3H9.5 M7 0.5L8.2 1.8 M4.5 0.8L3.5 5L0.5 9.6 M4 5H8L3 9.6 M4.5 6L9.6 9.6" stroke="#000" stroke-width="1.3" fill="none"/></svg>
<svg style="left:305.85px;top:127.44999999999999px" width="7" height="7" viewBox="0 0 10 10"><path d="M0.5 2.5H9.5 M4.5 0.3L1 5.5 M2.5 5H8V8.5L7.2 8.2 M2.5 5V9 M5.2 3.5V9.8" stroke="#000" stroke-width="1.3" fill="none"/></svg>
<svg style="left:312.70px;top:127.44999999999999px" width="7" height="7" viewBox="0 0 10 10"><path d="M0.8 1.5H3.8V8H0.8Z M0.8 4.7H3.8 M4.8 3H9.8 M8 0.5V9.6L6.8 9 M5.8 5L6.6 6.5" stroke="#000" stroke-width="1.3" fill="none"/></svg>
<svg style="left:319.55px;top:127.44999999999999px" width="7" height="7" viewBox="0 0 10 10"><path d="M1 0.5L2 1.5 M1 2.5V9.7 M3.2 1H9V9.7L8 9.3 M3.6 3.5H6.8V8H3.6Z M3.6 5.7H6.8" stroke="#000" stroke-width="1.3" fill="none"/></svg>
<div style="left:351.0px;top:127.44999999999999px;width:7.2px;height:7.2px;background:#fff;border:1px solid #e2e2de;"></div>
<div class="t" style="left:379px;top:127.34999999999998px;color:#000;transform:scaleX(0.830);transform-origin:0 0;">1</div>
<div style="left:486.9px;top:127.44999999999999px;width:7.2px;height:7.2px;background:linear-gradient(135deg,#e4e8ee,#fff 70%);border:1px solid #55808f;"></div>
<svg style="left:488.0px;top:128.64999999999998px" width="5" height="5" viewBox="0 0 5 5"><path d="M0.6 2.4L2 3.9L4.5 0.8" stroke="#3aa24a" stroke-width="1.2" fill="none"/></svg>
<div style="left:513.3px;top:127.44999999999999px;width:7.2px;height:7.2px;background:linear-gradient(135deg,#e4e8ee,#fff 70%);border:1px solid #55808f;"></div>
<svg style="left:514.4px;top:128.64999999999998px" width="5" height="5" viewBox="0 0 5 5"><path d="M0.6 2.4L2 3.9L4.5 0.8" stroke="#3aa24a" stroke-width="1.2" fill="none"/></svg>
<div style="left:171.2px;top:77.6px;width:0.8px;height:58.1px;background:#e3e0d3;"></div>
<div style="left:273.6px;top:77.6px;width:0.8px;height:58.1px;background:#e3e0d3;"></div>
<div style="left:296.6px;top:77.6px;width:0.8px;height:58.1px;background:#e3e0d3;"></div>
<div style="left:330.6px;top:77.6px;width:0.8px;height:58.1px;background:#e3e0d3;"></div>
<div style="left:376.6px;top:77.6px;width:0.8px;height:58.1px;background:#e3e0d3;"></div>
<div style="left:414.6px;top:77.6px;width:0.8px;height:58.1px;background:#e3e0d3;"></div>
<div style="left:478.6px;top:77.6px;width:0.8px;height:58.1px;background:#e3e0d3;"></div>
<div style="left:500.6px;top:77.6px;width:0.8px;height:58.1px;background:#e3e0d3;"></div>
<div style="left:531.6px;top:77.6px;width:0.8px;height:58.1px;background:#e3e0d3;"></div>
<div style="left:574.6px;top:77.6px;width:0.8px;height:58.1px;background:#e3e0d3;"></div>
<div style="left:171.2px;top:107.10000000000001px;width:0.8px;height:9.199999999999994px;background:#7d9fdb;"></div>
<div style="left:273.6px;top:107.10000000000001px;width:0.8px;height:9.199999999999994px;background:#7d9fdb;"></div>
<div style="left:296.6px;top:107.10000000000001px;width:0.8px;height:9.199999999999994px;background:#7d9fdb;"></div>
<div style="left:330.6px;top:107.10000000000001px;width:0.8px;height:9.199999999999994px;background:#7d9fdb;"></div>
<div style="left:376.6px;top:107.10000000000001px;width:0.8px;height:9.199999999999994px;background:#7d9fdb;"></div>
<div style="left:414.6px;top:107.10000000000001px;width:0.8px;height:9.199999999999994px;background:#7d9fdb;"></div>
<div style="left:478.6px;top:107.10000000000001px;width:0.8px;height:9.199999999999994px;background:#7d9fdb;"></div>
<div style="left:500.6px;top:107.10000000000001px;width:0.8px;height:9.199999999999994px;background:#7d9fdb;"></div>
<div style="left:531.6px;top:107.10000000000001px;width:0.8px;height:9.199999999999994px;background:#7d9fdb;"></div>
<div style="left:574.6px;top:107.10000000000001px;width:0.8px;height:9.199999999999994px;background:#7d9fdb;"></div>
<div style="left:321.4px;top:107.3px;width:9.4px;height:8.8px;background:#efede6;border:0.5px solid #fff;"></div>
<div class="t" style="left:323.3px;top:107.3px;font-size:5.5px;transform:scaleX(0.850);transform-origin:0 0;">a</div>
<svg style="left:326.5px;top:110.2px" width="3.6" height="4.5" viewBox="0 0 4 5"><path d="M0.3 0.3L3.8 2.5L0.3 4.7Z" fill="#111"/></svg>
<div style="left:407px;top:107.3px;width:7.6px;height:8.8px;background:#fff;border:0.5px solid #d8d4c8;"></div>
<svg style="left:409px;top:108.3px" width="4" height="7" viewBox="0 0 4 7"><path d="M2 0.3L3.6 2.4H0.4Z M2 6.7L3.6 4.6H0.4Z" fill="#222"/></svg>
<div style="left:471px;top:107.3px;width:7.8px;height:8.8px;background:#fff;border:0.5px solid #d8d4c8;"></div>
<svg style="left:472.6px;top:110.5px" width="4.6" height="3" viewBox="0 0 5 3"><path d="M0.2 0.3H4.8L2.5 2.8Z" fill="#111"/></svg>
<div style="left:567px;top:107.3px;width:7.8px;height:8.8px;background:#fff;border:0.5px solid #d8d4c8;"></div>
<svg style="left:568.6px;top:110.5px" width="4.6" height="3" viewBox="0 0 5 3"><path d="M0.2 0.3H4.8L2.5 2.8Z" fill="#111"/></svg>
<svg style="left:124.2px;top:108.9px" width="4" height="5.6" viewBox="0 0 4 6"><path d="M0.4 0.4L3.6 3L0.4 5.6Z" fill="#6a685c" stroke="#333" stroke-width="0.5"/></svg>
<div style="left:123px;top:284px;width:477px;height:11.6px;background:linear-gradient(#f3f2ec 0%,#fdfdfb 35%,#fbfaf6 70%,#eeede5 100%);"></div>
<div style="left:123.4px;top:285.2px;width:10px;height:8.6px;background:linear-gradient(#d3e0fc,#bccdf7);border-radius:1px;"></div>
<svg style="left:125.6px;top:287px" width="4.4" height="5.6" viewBox="0 0 4.4 5.6"><path d="M3.6 0.5L1 2.8L3.6 5.1" stroke="#2a4fa8" stroke-width="1.3" fill="none"/></svg>
<div style="left:134px;top:285.2px;width:171.4px;height:8.6px;background:linear-gradient(#cddcfc 0%,#bccffa 40%,#b0c5f4 100%);border-radius:1px;"></div>
<div style="left:216px;top:287.5px;width:0.8px;height:4.4px;background:#a3b8ea;"></div>
<div style="left:218px;top:287.5px;width:0.8px;height:4.4px;background:#a3b8ea;"></div>
<div style="left:220px;top:287.5px;width:0.8px;height:4.4px;background:#a3b8ea;"></div>
<div style="left:589.6px;top:285.2px;width:9px;height:8.6px;background:linear-gradient(#d3e0fc,#bccdf7);border-radius:1px;"></div>
<svg style="left:592px;top:287px" width="4.4" height="5.6" viewBox="0 0 4.4 5.6"><path d="M0.8 0.5L3.4 2.8L0.8 5.1" stroke="#2a4fa8" stroke-width="1.3" fill="none"/></svg>
<div style="left:123px;top:295.6px;width:477px;height:1.6px;background:#e4e1d2;"></div>
<div style="left:123.5px;top:297.2px;width:236.0px;height:11.8px;background:linear-gradient(#f9f8f3,#edebdf);"></div>
<div class="t" style="left:125.0px;top:299.8px;transform:scaleX(0.918);transform-origin:0 0;">View Tag</div>
<div style="left:123.5px;top:309px;width:236.0px;height:16.6px;background:linear-gradient(#f3f1e7,#e3e0cf);"></div>
<div style="left:123.5px;top:325px;width:236.0px;height:1.2px;background:#b9b5a0;"></div>
<div style="left:363.7px;top:297.2px;width:236.3px;height:11.8px;background:linear-gradient(#f9f8f3,#edebdf);"></div>
<div class="t" style="left:365.2px;top:299.8px;transform:scaleX(0.941);transform-origin:0 0;">Edit Tag</div>
<div style="left:363.7px;top:309px;width:236.3px;height:16.6px;background:linear-gradient(#f3f1e7,#e3e0cf);"></div>
<div style="left:363.7px;top:325px;width:236.3px;height:1.2px;background:#b9b5a0;"></div>
<div style="left:359.5px;top:297.2px;width:4.2px;height:136px;background:#e9e6d7;"></div>
<div style="left:361.2px;top:297.2px;width:0.8px;height:136px;background:#d4d0c0;"></div>
<div style="left:350.5px;top:300px;width:7.6px;height:7.6px;background:linear-gradient(135deg,#ea8a64,#c9502c);border:0.6px solid #f2cdbd;border-radius:1px;"></div>
<svg style="left:352.3px;top:301.8px" width="4" height="4" viewBox="0 0 4 4"><path d="M0.3 0.3L3.7 3.7M3.7 0.3L0.3 3.7" stroke="#fff" stroke-width="1.2" fill="none"/></svg>
<div style="left:588.4px;top:300px;width:7.6px;height:7.6px;background:linear-gradient(135deg,#ea8a64,#c9502c);border:0.6px solid #f2cdbd;border-radius:1px;"></div>
<svg style="left:590.1999999999999px;top:301.8px" width="4" height="4" viewBox="0 0 4 4"><path d="M0.3 0.3L3.7 3.7M3.7 0.3L0.3 3.7" stroke="#fff" stroke-width="1.2" fill="none"/></svg>
<div style="left:125.8px;top:326.2px;width:225.39999999999998px;height:107px;background:#fff;"></div>
<div style="left:125.8px;top:325.8px;width:225.39999999999998px;height:10.36px;background:#ebe8d8;"></div>
<div style="left:127.39999999999999px;top:328.68px;width:4.6px;height:4.6px;background:#fbfbf8;border:1px solid #b4b8bc;"></div>
<div style="left:128.5px;top:330.58000000000004px;width:2.4px;height:0.8px;background:#666;"></div>
<div style="left:133.39999999999998px;top:326.40000000000003px;width:61.6px;height:9.16px;background:#d6d2c2;"></div>
<div class="t" style="left:134.2px;top:327.48px;font-weight:bold;transform:scaleX(1.072);transform-origin:0 0;">DIV Tag Attributes</div>
<div style="left:125.8px;top:335.76000000000005px;width:225.39999999999998px;height:0.8px;background:#e6e3d8;"></div>
<div style="left:125.8px;top:336.16px;width:7.700000000000003px;height:10.36px;background:#ebe8d8;"></div>
<div class="t" style="left:142px;top:337.84000000000003px;transform:scaleX(0.865);transform-origin:0 0;">Align</div>
<div style="left:193.29999999999998px;top:336.16px;width:0.8px;height:10.36px;background:#e4e1d6;"></div>
<div style="left:133.5px;top:346.12000000000006px;width:225.39999999999998px;height:0.8px;background:#e6e3d8;"></div>
<div style="left:125.8px;top:346.52px;width:7.700000000000003px;height:10.36px;background:#ebe8d8;"></div>
<div class="t" style="left:142px;top:348.2px;transform:scaleX(0.935);transform-origin:0 0;">Italic</div>
<div style="left:193.29999999999998px;top:346.52px;width:0.8px;height:10.36px;background:#e4e1d6;"></div>
<div style="left:133.5px;top:356.48px;width:225.39999999999998px;height:0.8px;background:#e6e3d8;"></div>
<div style="left:268.84999999999997px;top:348.09999999999997px;width:7.2px;height:7.2px;background:linear-gradient(135deg,#e6e6e2,#fff 70%);border:1px solid #8a949c;"></div>
<div style="left:125.8px;top:356.88px;width:7.700000000000003px;height:10.36px;background:#ebe8d8;"></div>
<div class="t" style="left:142px;top:358.56px;transform:scaleX(0.822);transform-origin:0 0;">Bold</div>
<div style="left:193.29999999999998px;top:356.88px;width:0.8px;height:10.36px;background:#e4e1d6;"></div>
<div style="left:133.5px;top:366.84000000000003px;width:225.39999999999998px;height:0.8px;background:#e6e3d8;"></div>
<div style="left:268.84999999999997px;top:358.46px;width:7.2px;height:7.2px;background:linear-gradient(135deg,#e6e6e2,#fff 70%);border:1px solid #8a949c;"></div>
<div style="left:125.8px;top:367.24px;width:7.700000000000003px;height:10.36px;background:#ebe8d8;"></div>
<div class="t" style="left:142px;top:368.92px;transform:scaleX(0.948);transform-origin:0 0;">Custom attributes</div>
<div style="left:193.29999999999998px;top:367.24px;width:0.8px;height:10.36px;background:#e4e1d6;"></div>
<div style="left:133.5px;top:377.20000000000005px;width:225.39999999999998px;height:0.8px;background:#e6e3d8;"></div>
<div class="t" style="left:134.2px;top:379.28000000000003px;transform:scaleX(0.899);transform-origin:0 0;">Format</div>
<div style="left:193.29999999999998px;top:377.6px;width:0.8px;height:10.36px;background:#e4e1d6;"></div>
<div style="left:125.8px;top:387.56000000000006px;width:225.39999999999998px;height:0.8px;background:#e6e3d8;"></div>
<div class="t" style="left:195.1px;top:379.28000000000003px;transform:scaleX(0.901);transform-origin:0 0;">None</div>
<div style="left:125.8px;top:387.96000000000004px;width:225.39999999999998px;height:10.36px;background:#ebe8d8;"></div>
<div style="left:127.39999999999999px;top:390.84000000000003px;width:4.6px;height:4.6px;background:#fbfbf8;border:1px solid #b4b8bc;"></div>
<div style="left:128.5px;top:392.74000000000007px;width:2.4px;height:0.8px;background:#666;"></div>
<div class="t" style="left:134.2px;top:389.64000000000004px;font-weight:bold;transform:scaleX(1.040);transform-origin:0 0;">Hyperlink</div>
<div style="left:125.8px;top:397.9200000000001px;width:225.39999999999998px;height:0.8px;background:#e6e3d8;"></div>
<div style="left:125.8px;top:398.32px;width:7.700000000000003px;height:10.36px;background:#ebe8d8;"></div>
<div class="t" style="left:142px;top:400.0px;transform:scaleX(0.872);transform-origin:0 0;">HREF field</div>
<div style="left:193.29999999999998px;top:398.32px;width:0.8px;height:10.36px;background:#e4e1d6;"></div>
<div style="left:133.5px;top:408.28000000000003px;width:225.39999999999998px;height:0.8px;background:#e6e3d8;"></div>
<div style="left:125.8px;top:408.68px;width:7.700000000000003px;height:10.36px;background:#ebe8d8;"></div>
<div class="t" style="left:142px;top:410.36px;transform:scaleX(0.928);transform-origin:0 0;">Original field value</div>
<div style="left:193.29999999999998px;top:408.68px;width:0.8px;height:10.36px;background:#e4e1d6;"></div>
<div style="left:133.5px;top:418.64000000000004px;width:225.39999999999998px;height:0.8px;background:#e6e3d8;"></div>
<div style="left:268.84999999999997px;top:410.26px;width:7.2px;height:7.2px;background:linear-gradient(135deg,#e6e6e2,#fff 70%);border:1px solid #8a949c;"></div>
<div style="left:125.8px;top:419.04px;width:7.700000000000003px;height:10.36px;background:#ebe8d8;"></div>
<div class="t" style="left:142px;top:420.72px;transform:scaleX(0.985);transform-origin:0 0;">Target</div>
<div style="left:193.29999999999998px;top:419.04px;width:0.8px;height:10.36px;background:#e4e1d6;"></div>
<div style="left:133.5px;top:429.00000000000006px;width:225.39999999999998px;height:0.8px;background:#e6e3d8;"></div>
<div style="left:125.8px;top:429.4px;width:7.700000000000003px;height:10.36px;background:#ebe8d8;"></div>
<div class="t" style="left:142px;top:431.08px;transform:scaleX(0.903);transform-origin:0 0;">Prefix</div>
<div style="left:193.29999999999998px;top:429.4px;width:0.8px;height:10.36px;background:#e4e1d6;"></div>
<div style="left:133.5px;top:439.36px;width:225.39999999999998px;height:0.8px;background:#e6e3d8;"></div>
<div style="left:133.2px;top:326.2px;width:0.6px;height:107px;background:#dedbcd;"></div>
<div style="left:194.2px;top:325.8px;width:157px;height:10.36px;background:#ebe8d8;"></div>
<div style="left:194.2px;top:335.8px;width:157px;height:0.8px;background:#e6e3d8;"></div>
<div style="left:351.2px;top:326.2px;width:8.3px;height:107px;background:linear-gradient(90deg,#c5d5fb,#d3e0fd 50%,#c2d2f8);"></div>
<div style="left:351.2px;top:326.6px;width:8.3px;height:9px;background:linear-gradient(#d4e0fd,#bccdf8);border-radius:1px;"></div>
<svg style="left:353px;top:329px" width="5" height="4" viewBox="0 0 5 4"><path d="M0.5 3.2L2.5 1L4.5 3.2" stroke="#2a4fa8" stroke-width="1.2" fill="none"/></svg>
<div style="left:353.2px;top:382px;width:4.4px;height:0.7px;background:#a9bdee;"></div>
<div style="left:353.2px;top:384px;width:4.4px;height:0.7px;background:#a9bdee;"></div>
<div style="left:353.2px;top:386px;width:4.4px;height:0.7px;background:#a9bdee;"></div>
<div style="left:364px;top:326.2px;width:233px;height:107px;background:#fff;"></div>
<div style="left:364px;top:326.0px;width:233px;height:10.22px;background:#ebe8d8;"></div>
<div style="left:365.6px;top:328.81px;width:4.6px;height:4.6px;background:#fbfbf8;border:1px solid #b4b8bc;"></div>
<div style="left:366.7px;top:330.71000000000004px;width:2.4px;height:0.8px;background:#666;"></div>
<div style="left:372.4px;top:326.6px;width:68.89999999999999px;height:9.020000000000001px;background:#d6d2c2;"></div>
<div class="t" style="left:373.2px;top:327.61px;font-weight:bold;transform:scaleX(1.041);transform-origin:0 0;">INPUT Tag Attributes</div>
<div style="left:364px;top:335.82000000000005px;width:233px;height:0.8px;background:#e6e3d8;"></div>
<div style="left:364px;top:336.22px;width:8px;height:10.22px;background:#ebe8d8;"></div>
<div class="t" style="left:380.7px;top:337.83000000000004px;transform:scaleX(0.815);transform-origin:0 0;">Size</div>
<div style="left:462.1px;top:336.22px;width:0.8px;height:10.22px;background:#e4e1d6;"></div>
<div style="left:372px;top:346.0400000000001px;width:233px;height:0.8px;background:#e6e3d8;"></div>
<div class="t" style="left:463.9px;top:337.83000000000004px;transform:scaleX(0.871);transform-origin:0 0;">30</div>
<div style="left:364px;top:346.44px;width:8px;height:10.22px;background:#ebe8d8;"></div>
<div class="t" style="left:380.7px;top:348.05px;transform:scaleX(0.944);transform-origin:0 0;">Maxlength</div>
<div style="left:462.1px;top:346.44px;width:0.8px;height:10.22px;background:#e4e1d6;"></div>
<div style="left:372px;top:356.26000000000005px;width:233px;height:0.8px;background:#e6e3d8;"></div>
<div class="t" style="left:463.9px;top:348.05px;transform:scaleX(0.876);transform-origin:0 0;">255</div>
<div style="left:364px;top:356.66px;width:8px;height:10.22px;background:#ebe8d8;"></div>
<div class="t" style="left:380.7px;top:358.27000000000004px;transform:scaleX(0.948);transform-origin:0 0;">Custom attributes</div>
<div style="left:462.1px;top:356.66px;width:0.8px;height:10.22px;background:#e4e1d6;"></div>
<div style="left:372px;top:366.4800000000001px;width:233px;height:0.8px;background:#e6e3d8;"></div>
<div class="t" style="left:373.2px;top:368.49px;transform:scaleX(0.909);transform-origin:0 0;">Use lookup table</div>
<div style="left:462.1px;top:366.88px;width:0.8px;height:10.22px;background:#e4e1d6;"></div>
<div style="left:364px;top:376.70000000000005px;width:233px;height:0.8px;background:#e6e3d8;"></div>
<div style="left:526.15px;top:368.39px;width:7.2px;height:7.2px;background:linear-gradient(135deg,#e6e6e2,#fff 70%);border:1px solid #8a949c;"></div>
<div class="t" style="left:373.2px;top:378.71000000000004px;transform:scaleX(0.930);transform-origin:0 0;">Force selection</div>
<div style="left:462.1px;top:377.1px;width:0.8px;height:10.22px;background:#e4e1d6;"></div>
<div style="left:364px;top:386.9200000000001px;width:233px;height:0.8px;background:#e6e3d8;"></div>
<div style="left:526.15px;top:378.61px;width:7.2px;height:7.2px;background:linear-gradient(135deg,#e6e6e2,#fff 70%);border:1px solid #8a949c;"></div>
<div class="t" style="left:373.2px;top:388.93px;transform:scaleX(0.919);transform-origin:0 0;">Check duplicate</div>
<div style="left:462.1px;top:387.32px;width:0.8px;height:10.22px;background:#e4e1d6;"></div>
<div style="left:364px;top:397.14000000000004px;width:233px;height:0.8px;background:#e6e3d8;"></div>
<div style="left:526.15px;top:388.83px;width:7.2px;height:7.2px;background:linear-gradient(135deg,#e6e6e2,#fff 70%);border:1px solid #8a949c;"></div>
<div style="left:364px;top:397.54px;width:233px;height:10.22px;background:#ebe8d8;"></div>
<div style="left:365.6px;top:400.35px;width:4.6px;height:4.6px;background:#fbfbf8;border:1px solid #b4b8bc;"></div>
<div style="left:366.7px;top:402.25000000000006px;width:2.4px;height:0.8px;background:#666;"></div>
<div class="t" style="left:373.2px;top:399.15000000000003px;font-weight:bold;transform:scaleX(1.042);transform-origin:0 0;">Validation</div>
<div style="left:364px;top:407.36000000000007px;width:233px;height:0.8px;background:#e6e3d8;"></div>
<div style="left:364px;top:407.76px;width:8px;height:10.22px;background:#ebe8d8;"></div>
<div class="t" style="left:380.7px;top:409.37px;transform:scaleX(0.956);transform-origin:0 0;">Validate</div>
<div style="left:462.1px;top:407.76px;width:0.8px;height:10.22px;background:#e4e1d6;"></div>
<div style="left:372px;top:417.58000000000004px;width:233px;height:0.8px;background:#e6e3d8;"></div>
<div class="t" style="left:463.9px;top:409.37px;transform:scaleX(0.881);transform-origin:0 0;">(None)</div>
<div style="left:364px;top:417.98px;width:8px;height:10.22px;background:#ebe8d8;"></div>
<div class="t" style="left:380.7px;top:419.59000000000003px;transform:scaleX(0.910);transform-origin:0 0;">Required</div>
<div style="left:462.1px;top:417.98px;width:0.8px;height:10.22px;background:#e4e1d6;"></div>
<div style="left:372px;top:427.80000000000007px;width:233px;height:0.8px;background:#e6e3d8;"></div>
<div style="left:526.15px;top:419.49px;width:7.2px;height:7.2px;background:linear-gradient(135deg,#e6e6e2,#fff 70%);border:1px solid #8a949c;"></div>
<div style="left:364px;top:428.2px;width:8px;height:10.22px;background:#ebe8d8;"></div>
<div class="t" style="left:380.7px;top:429.81px;transform:scaleX(0.892);transform-origin:0 0;">Error message</div>
<div style="left:462.1px;top:428.2px;width:0.8px;height:10.22px;background:#e4e1d6;"></div>
<div style="left:372px;top:438.02000000000004px;width:233px;height:0.8px;background:#e6e3d8;"></div>
<div style="left:371.7px;top:326.2px;width:0.6px;height:107px;background:#dedbcd;"></div>
<div style="left:597px;top:326.2px;width:3px;height:107px;background:#ece9d8;"></div>
<div style="left:0;top:0;width:600px;height:433px;opacity:.8">
<div style="left:124.7px;top:312px;width:13px;height:11.8px;background:#fff;border:1px solid #8a8a94;border-radius:1px;"></div>
<svg style="left:126.5px;top:313.5px" width="10" height="9" viewBox="0 0 10 9"><path d="M4 8.2L9.2 2.4V8.2Z" fill="#8a8ee0" stroke="#3a40b0" stroke-width="1"/><path d="M0.5 4L1.8 0.8L3.1 4M0.9 2.9H2.7" stroke="#222" stroke-width="0.8" fill="none"/></svg>
<div style="left:140.2px;top:314.2px;width:8px;height:7.6px;background:linear-gradient(135deg,#eef0ee,#b4bcc0);border:1px solid #a0a8ac;"></div>
<div style="left:142.5px;top:316.5px;width:4px;height:3.5px;background:#8c9c94;"></div>
<div style="left:364.6px;top:313px;width:11.6px;height:10.8px;background:#fff;border:1px solid #6e6e78;border-radius:1px;"></div>
<div class="t" style="left:366.2px;top:314.4px;font-size:6px;font-weight:bold;transform:scaleX(0.969);transform-origin:0 0;">abl</div>
<div style="left:379px;top:316px;width:9px;height:4.6px;background:#dfe8fb;border:1px solid #a8bce8;"></div>
<div style="left:381.5px;top:317.8px;width:1.3px;height:1.3px;background:#6a7ec0;"></div>
<div style="left:384.4px;top:317.8px;width:1.3px;height:1.3px;background:#6a7ec0;"></div>
<div style="left:393px;top:314.4px;width:8px;height:8px;background:#f8fbf8;border:1px solid #6a9a8c;border-radius:4px;"></div>
<div style="left:395.8px;top:317.2px;width:2.4px;height:2.4px;background:#4aa85a;border-radius:1.2px;"></div>
<div style="left:407px;top:314.6px;width:8px;height:7.6px;background:#fff;border:1px solid #3d8a94;"></div>
<svg style="left:408.6px;top:316px" width="5" height="5" viewBox="0 0 5 5"><path d="M0.6 2.4L2 3.9L4.5 0.8" stroke="#3a9a6a" stroke-width="1.1" fill="none"/></svg>
<div style="left:420px;top:314.4px;width:9px;height:8px;background:linear-gradient(#b8cdf0,#e8effa 40%,#dfe8f8);border:1px solid #7f98cc;"></div>
<div style="left:422px;top:316.2px;width:5px;height:1px;background:#5a78c0;"></div>
<div style="left:423.5px;top:318.4px;width:3.5px;height:2.6px;background:#7f98cc;"></div>
<div style="left:433.4px;top:314.6px;width:8.6px;height:7.8px;background:#e8ecf4;border:1px solid #8a94b4;"></div>
<div style="left:439px;top:315.6px;width:2px;height:5.8px;background:#a8b4d4;"></div>
<div style="left:435px;top:320px;width:3.4px;height:1px;background:#7080a8;"></div>
<svg style="left:447px;top:313.6px" width="10" height="10" viewBox="0 0 10 10"><path d="M1 0.8V4.2H4" stroke="#3a60c8" stroke-width="1.2" fill="none"/><rect x="3.8" y="3.6" width="5" height="5.4" fill="#f4f6fb" stroke="#9aa8cc" stroke-width="0.8"/></svg>
<div style="left:461px;top:316.2px;width:7.2px;height:4.4px;background:#dcdcd8;border:0.5px solid #b4b4b0;"></div>
<div class="t" style="left:462.2px;top:314.6px;color:#444;font-size:4.5px;transform:scaleX(0.919);transform-origin:0 0;">ab</div>
</div>
</div>
</body></html>
